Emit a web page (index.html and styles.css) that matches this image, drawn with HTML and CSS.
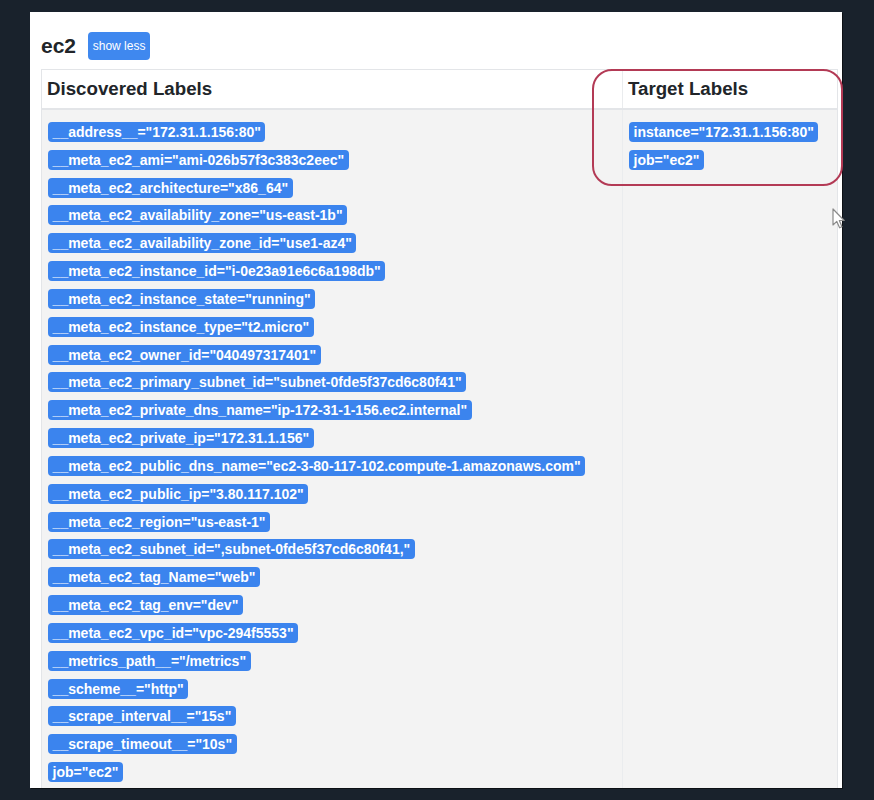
FILE: index.html
```html
<!DOCTYPE html>
<html>
<head>
<meta charset="utf-8">
<link rel="stylesheet" href="styles.css">
</head>
<body>
<div class="panel">
  <div class="title-row">
    <h2 class="job-title">ec2</h2>
    <button class="btn">show less</button>
  </div>
  <div class="table">
    <div class="thead">
      <div class="th th-left">Discovered Labels</div>
      <div class="th">Target Labels</div>
    </div>
    <div class="tbody">
      <div class="td td-left">
        <span class="badge">__address__="172.31.1.156:80"</span>
        <span class="badge">__meta_ec2_ami="ami-026b57f3c383c2eec"</span>
        <span class="badge">__meta_ec2_architecture="x86_64"</span>
        <span class="badge">__meta_ec2_availability_zone="us-east-1b"</span>
        <span class="badge">__meta_ec2_availability_zone_id="use1-az4"</span>
        <span class="badge">__meta_ec2_instance_id="i-0e23a91e6c6a198db"</span>
        <span class="badge">__meta_ec2_instance_state="running"</span>
        <span class="badge">__meta_ec2_instance_type="t2.micro"</span>
        <span class="badge">__meta_ec2_owner_id="040497317401"</span>
        <span class="badge">__meta_ec2_primary_subnet_id="subnet-0fde5f37cd6c80f41"</span>
        <span class="badge">__meta_ec2_private_dns_name="ip-172-31-1-156.ec2.internal"</span>
        <span class="badge">__meta_ec2_private_ip="172.31.1.156"</span>
        <span class="badge">__meta_ec2_public_dns_name="ec2-3-80-117-102.compute-1.amazonaws.com"</span>
        <span class="badge">__meta_ec2_public_ip="3.80.117.102"</span>
        <span class="badge">__meta_ec2_region="us-east-1"</span>
        <span class="badge">__meta_ec2_subnet_id=",subnet-0fde5f37cd6c80f41,"</span>
        <span class="badge">__meta_ec2_tag_Name="web"</span>
        <span class="badge">__meta_ec2_tag_env="dev"</span>
        <span class="badge">__meta_ec2_vpc_id="vpc-294f5553"</span>
        <span class="badge">__metrics_path__="/metrics"</span>
        <span class="badge">__scheme__="http"</span>
        <span class="badge">__scrape_interval__="15s"</span>
        <span class="badge">__scrape_timeout__="10s"</span>
        <span class="badge">job="ec2"</span>
      </div>
      <div class="td">
        <span class="badge">instance="172.31.1.156:80"</span>
        <span class="badge">job="ec2"</span>
      </div>
    </div>
  </div>
  <div class="highlight"></div>
  <svg class="cursor" width="14" height="22" viewBox="0 0 14 22">
    <path d="M1 1 L1 17 L4.8 13.4 L7.6 19.8 L10 18.8 L7.3 12.5 L12.2 12.5 Z" fill="#ffffff" stroke="#8a8a8a" stroke-width="1.2" stroke-linejoin="round"/>
  </svg>
</div>
</body>
</html>
```

FILE: styles.css
```css
html, body {
  margin: 0;
  padding: 0;
  background: #19222c;
  height: 800px;
  overflow: hidden;
}

body {
  padding: 12px 0 0 30px;
  box-sizing: border-box;
  font-family: "Liberation Sans", Arial, sans-serif;
  color: #212529;
}

.panel {
  position: relative;
  width: 812px;
  height: 776px;
  background: #ffffff;
  box-sizing: border-box;
  padding: 20px 0 0 11px;
  overflow: visible;
  box-shadow: 1px 1px 0 #0c1014;
}

.title-row {
  display: flex;
  align-items: flex-start;
  gap: 12px;
  height: 28px;
}

.job-title {
  margin: 2px 0 0 0;
  font-size: 21px;
  line-height: 24px;
  font-weight: bold;
  color: #212529;
}

.btn {
  height: 28px;
  width: 62px;
  padding: 0;
  border: none;
  border-radius: 4px;
  background: #3f88ef;
  color: #ffffff;
  font-family: "Liberation Sans", Arial, sans-serif;
  font-size: 12px;
  line-height: 28px;
}

.table {
  margin-top: 9px;
  width: 797px;
  height: 719px;
  overflow: hidden;
  border: 1px solid #e3e5e8;
  border-bottom: none;
  box-sizing: border-box;
}

.thead {
  display: grid;
  grid-template-columns: 581px 1fr;
  background: #ffffff;
  border-bottom: 2px solid #e3e5e8;
}

.th {
  height: 38px;
  box-sizing: border-box;
  padding: 5px 5px 0 5px;
  font-size: 18.7px;
  line-height: 28px;
  font-weight: bold;
  color: #212529;
}

.th-left,
.td-left {
  border-right: 1px solid #eaecee;
}

.tbody {
  display: grid;
  grid-template-columns: 581px 1fr;
  background: #f3f3f3;
  height: 700px;
}

.td {
  display: flex;
  flex-direction: column;
  align-items: flex-start;
  gap: 7.83px;
  padding: 12px 6px 0 6px;
}

.badge {
  display: inline-block;
  height: 20px;
  line-height: 20px;
  padding: 0 4.6px;
  border-radius: 4px;
  background: #3b84ee;
  color: #ffffff;
  font-size: 14px;
  font-weight: bold;
  white-space: nowrap;
}

.highlight {
  position: absolute;
  left: 562px;
  top: 57px;
  width: 251px;
  height: 117px;
  border: 2.5px solid #b33a55;
  border-radius: 20px;
  box-sizing: border-box;
}

.cursor {
  position: absolute;
  left: 802px;
  top: 196px;
}
```
